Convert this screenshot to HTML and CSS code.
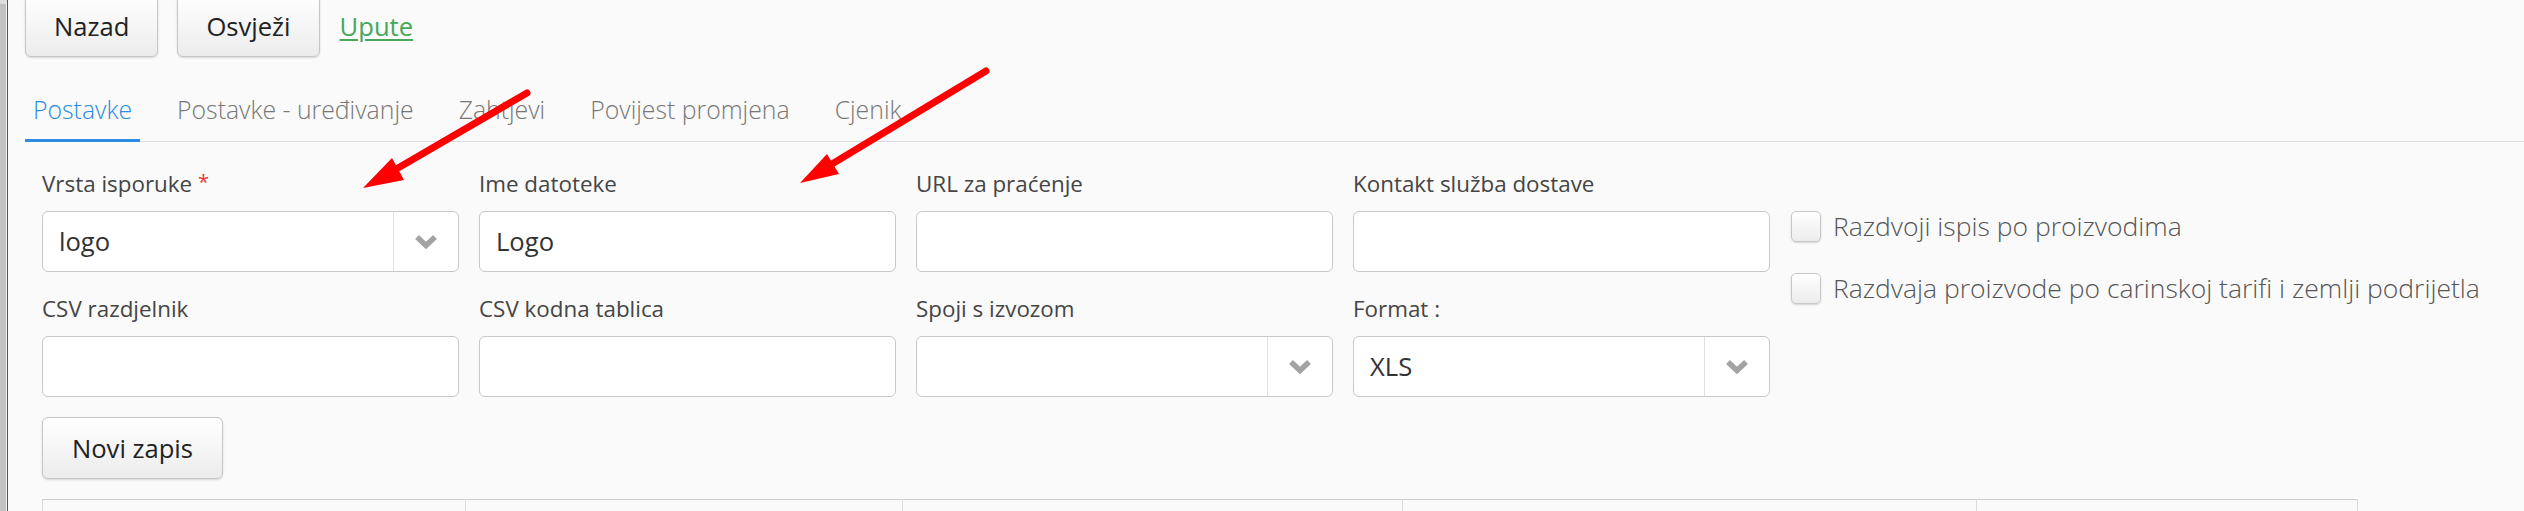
FILE: index.html
```html
<!DOCTYPE html>
<html lang="hr">
<head>
<meta charset="utf-8">
<title>Postavke</title>
<link rel="stylesheet" href="styles.css">
</head>
<body>
<div class="frame">
  <div class="edge"></div>
  <main class="main">
    <div class="toolbar">
      <button class="btn" type="button">Nazad</button>
      <button class="btn" type="button">Osvježi</button>
      <a class="help-link" href="#">Upute</a>
    </div>

    <ul class="tabs">
      <li class="tab active">Postavke</li>
      <li class="tab">Postavke - uređivanje</li>
      <li class="tab">Zahtjevi</li>
      <li class="tab">Povijest promjena</li>
      <li class="tab">Cjenik</li>
    </ul>

    <div class="form">
      <div class="grid">
        <div class="field">
          <label class="label">Vrsta isporuke <span class="req">*</span></label>
          <div class="input select">
            <span class="value">logo</span>
            <span class="caret"><svg width="24" height="15" viewBox="0 0 24 15"><polyline points="3,3 12,11.5 21,3" fill="none" stroke="#a3a3a3" stroke-width="5.5"/></svg></span>
          </div>
        </div>
        <div class="field">
          <label class="label">Ime datoteke</label>
          <div class="input"><span class="value">Logo</span></div>
        </div>
        <div class="field">
          <label class="label">URL za praćenje</label>
          <div class="input"></div>
        </div>
        <div class="field">
          <label class="label">Kontakt služba dostave</label>
          <div class="input"></div>
        </div>

        <div class="checks">
          <div class="check"><span class="box"></span><span class="check-text">Razdvoji ispis po proizvodima</span></div>
          <div class="check"><span class="box"></span><span class="check-text">Razdvaja proizvode po carinskoj tarifi i zemlji podrijetla</span></div>
        </div>

        <div class="field">
          <label class="label">CSV razdjelnik</label>
          <div class="input"></div>
        </div>
        <div class="field">
          <label class="label">CSV kodna tablica</label>
          <div class="input"></div>
        </div>
        <div class="field">
          <label class="label">Spoji s izvozom</label>
          <div class="input select">
            <span class="value"></span>
            <span class="caret"><svg width="24" height="15" viewBox="0 0 24 15"><polyline points="3,3 12,11.5 21,3" fill="none" stroke="#a3a3a3" stroke-width="5.5"/></svg></span>
          </div>
        </div>
        <div class="field">
          <label class="label">Format :</label>
          <div class="input select">
            <span class="value">XLS</span>
            <span class="caret"><svg width="24" height="15" viewBox="0 0 24 15"><polyline points="3,3 12,11.5 21,3" fill="none" stroke="#a3a3a3" stroke-width="5.5"/></svg></span>
          </div>
        </div>
      </div>

      <button class="btn btn-new" type="button">Novi zapis</button>

      <table class="table">
        <tr>
          <th class="c1"></th>
          <th class="c2"></th>
          <th class="c3"></th>
          <th class="c4"></th>
          <th class="c5"></th>
        </tr>
      </table>
    </div>
  </main>
</div>

<svg class="arrows" width="2524" height="511" viewBox="0 0 2524 511">
  <line x1="527" y1="93" x2="398" y2="168" stroke="#ff0000" stroke-width="7" stroke-linecap="round"/>
  <polygon points="363,188 392,158 404,180" fill="#ff0000"/>
  <line x1="986" y1="71" x2="832" y2="164" stroke="#ff0000" stroke-width="7" stroke-linecap="round"/>
  <polygon points="800,183 827,154 839,174" fill="#ff0000"/>
</svg>
</body>
</html>
```

FILE: styles.css
```css
html, body {
  margin: 0;
  padding: 0;
  background: #fafafa;
  font-family: "Open Sans", "DejaVu Sans", sans-serif;
  color: #444;
  overflow: hidden;
}

.frame {
  display: flex;
  min-height: 511px;
}

.edge {
  width: 6px;
  flex: none;
  background: #c2c2c2;
  border-top: 4px solid #dedede;
  border-right: 1px solid #f2f2f2;
}

.main {
  flex: 1;
  border-left: 1px solid #555;
  padding-left: 17px;
}

.toolbar {
  display: flex;
  align-items: center;
  gap: 19px;
  height: 62px;
  margin-top: -5px;
}

.btn {
  box-sizing: border-box;
  height: 62px;
  padding: 0 28px;
  font-family: "Open Sans", sans-serif;
  font-size: 25.6px;
  color: #222;
  background: linear-gradient(#ffffff, #ececec);
  border: 1px solid #c6c6c6;
  border-radius: 6px;
  box-shadow: 0 1px 2px rgba(0, 0, 0, 0.15);
}

.help-link {
  margin-left: 1px;
  font-size: 25.6px;
  color: #47a85a;
  text-decoration: underline;
  text-underline-offset: 3px;
}

.tabs {
  display: flex;
  gap: 29px;
  list-style: none;
  margin: 27px 0 0 0;
  padding: 0;
  border-bottom: 1px solid #dddddd;
}

.tab {
  padding: 10px 8px 15px;
  line-height: 30px;
  font-size: 24.8px;
  font-weight: 300;
  color: #777;
  border-bottom: 3px solid transparent;
  margin-bottom: -1px;
}

.tab.active {
  color: #2d8be2;
  border-bottom-color: #2d8be2;
}

.form {
  padding-left: 17px;
  margin-top: 27px;
}

.grid {
  display: grid;
  grid-template-columns: repeat(4, 417px) auto;
  column-gap: 20px;
  row-gap: 22px;
}

.label {
  display: block;
  font-size: 22.4px;
  line-height: 30px;
  height: 30px;
  margin-bottom: 12px;
  color: #454545;
}

.req {
  color: #e53935;
  font-size: 20px;
  line-height: 0;
  vertical-align: 3px;
}

.input {
  box-sizing: border-box;
  height: 61px;
  display: flex;
  align-items: center;
  background: #fff;
  border: 1px solid #c8c8c8;
  border-radius: 6px;
  font-size: 25.6px;
  color: #333;
}

.value {
  flex: 1;
  padding: 0 16px;
}

.caret {
  width: 64px;
  align-self: stretch;
  display: flex;
  align-items: center;
  justify-content: center;
  border-left: 1px solid #e2e2e2;
}

.checks {
  grid-column: 5;
  grid-row: 1 / span 2;
  padding-top: 41px;
  margin-left: 1px;
  display: flex;
  flex-direction: column;
  gap: 30px;
}

.check {
  display: flex;
  align-items: center;
  gap: 12px;
  height: 32px;
}

.box {
  box-sizing: border-box;
  width: 30px;
  height: 31px;
  border: 1px solid #c8c8c8;
  border-radius: 5px;
  background: linear-gradient(#ffffff, #ececec);
  box-shadow: 0 1px 2px rgba(0, 0, 0, 0.15);
}

.check-text {
  font-size: 26.5px;
  font-weight: 300;
  color: #555;
}

.btn-new {
  display: block;
  margin-top: 20px;
  width: 181px;
  padding: 0;
}

.table {
  margin-top: 20px;
  border-collapse: collapse;
  table-layout: fixed;
  width: 2310px;
}

.table th {
  height: 60px;
  padding: 0;
  border: 1px solid #dddddd;
  border-top: 1px solid #cccccc;
}

.c1 { width: 422px; }
.c2 { width: 436px; }
.c3 { width: 499px; }
.c4 { width: 573px; }
.c5 { width: 380px; }

.arrows {
  position: absolute;
  top: 0;
  left: 0;
  pointer-events: none;
}
```
